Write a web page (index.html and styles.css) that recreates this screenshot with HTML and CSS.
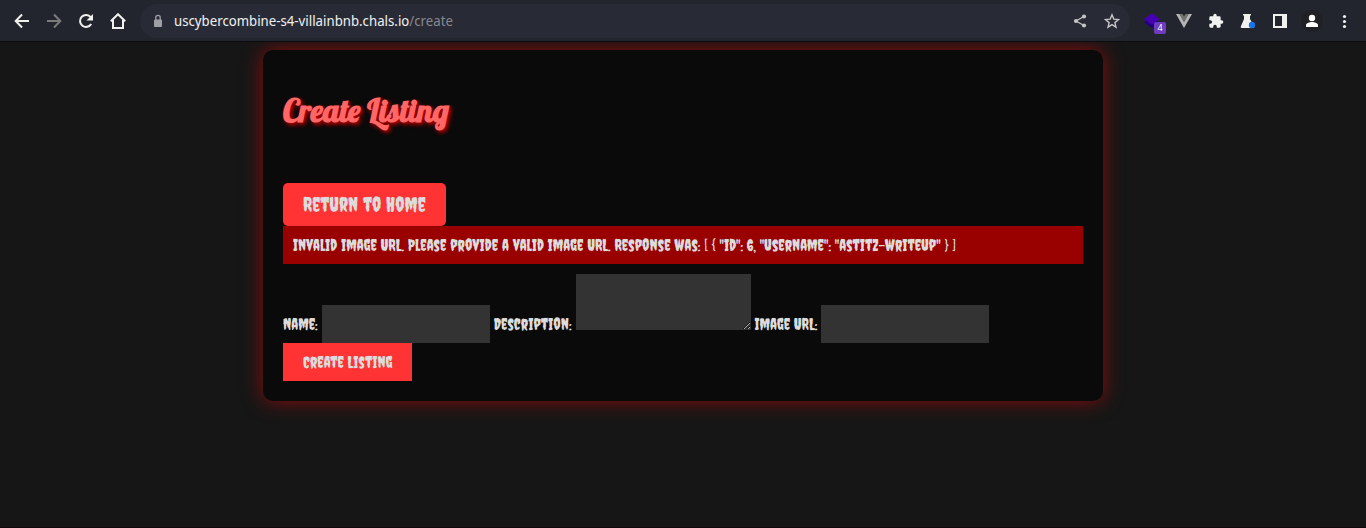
FILE: index.html
```html
<!DOCTYPE html>
<html lang="en">
<head>
<meta charset="utf-8">
<meta name="viewport" content="width=device-width, initial-scale=1">
<title>Create Listing</title>
<link rel="stylesheet" href="styles.css">
</head>
<body>
<header class="toolbar">
  <nav class="nav">
    <button class="icon-btn" type="button" aria-label="Back"><svg viewBox="0 0 16 16"><path d="M8 1.500 1.700 8 8 14.500M2 8h13" fill="none" stroke="#f1f1ee" stroke-width="2"/></svg></button>
    <button class="icon-btn" type="button" aria-label="Forward"><svg viewBox="0 0 16 16"><path d="M8 1.500 14.300 8 8 14.500M14 8H1" fill="none" stroke="#7b7b7d" stroke-width="2"/></svg></button>
    <button class="icon-btn" type="button" aria-label="Reload"><svg viewBox="0 0 16 16"><path d="M13.200 11A6 6 0 1 1 12.700 4.200" fill="none" stroke="#f1f1ee" stroke-width="2"/><path d="M15 1v6.500H8.500z" fill="#f1f1ee"/></svg></button>
    <button class="icon-btn" type="button" aria-label="Home"><svg viewBox="0 0 16 16"><path d="M.8 8.300 8 1.200l7.200 7.100M3 7v8h10V7" fill="none" stroke="#f1f1ee" stroke-width="2"/></svg></button>
  </nav>
  <div class="address">
    <svg class="lock" viewBox="0 0 10 14"><path d="M1 5.500h6a1 1 0 0 1 1 1V12a1 1 0 0 1-1 1H1a1 1 0 0 1-1-1V6.500a1 1 0 0 1 1-1z" fill="#9fa0a6"/><path d="M1.800 6V3.500a2.200 2.200 0 0 1 4.400 0V6" fill="none" stroke="#9fa0a6" stroke-width="1.300"/></svg>
    <span class="url">uscybercombine-s4-villainbnb.chals.io<span class="path">/create</span></span>
    <button class="icon-btn" type="button" aria-label="Share"><svg viewBox="0 0 16 16"><path d="M12 3.500 4 8l8 4.500" fill="none" stroke="#c4c4c4" stroke-width="1.300"/><g fill="#c4c4c4"><circle cx="12" cy="3.500" r="2.100"/><circle cx="4" cy="8" r="2.100"/><circle cx="12" cy="12.500" r="2.100"/></g></svg></button>
    <button class="icon-btn" type="button" aria-label="Bookmark"><svg viewBox="0 0 16 16"><path d="m8 1.800 1.800 4.300 4.700.4-3.600 3.100 1.100 4.600L8 11.700l-4 2.500 1.100-4.600-3.600-3.100 4.700-.4z" fill="none" stroke="#c4c4c4" stroke-width="1.400"/></svg></button>
  </div>
  <div class="extensions">
    <button class="icon-btn" type="button" aria-label="Layers extension, 4"><svg viewBox="0 0 16 16"><path d="M0 9.500 8 5l8 4.500L8 15z" fill="#1f0080"/><path d="M0 6 8 .3 16 6l-8 5.700z" fill="#4400b0"/></svg><span class="badge">4</span></button>
    <button class="icon-btn" type="button" aria-label="Vue"><svg viewBox="0 0 16 16"><path d="M0 1h3.500L8 9l4.500-8H16L8 15z" fill="#b5b5b5"/><path d="M3.500 1H6.500L8 3.500 9.500 1h3L8 9z" fill="#747474"/></svg></button>
    <button class="icon-btn" type="button" aria-label="Extensions"><svg viewBox="1 0 22 24"><path d="M20.500 11H19V7a2 2 0 0 0-2-2h-4V3.500a2.500 2.500 0 0 0-5 0V5H4a2 2 0 0 0-2 2v3.800h1.500a2.700 2.700 0 0 1 0 5.400H2V20a2 2 0 0 0 2 2h3.800v-1.500a2.700 2.700 0 0 1 5.400 0V22H17a2 2 0 0 0 2-2v-4h1.500a2.500 2.500 0 0 0 0-5z" fill="#f1f1ee"/></svg></button>
    <button class="icon-btn" type="button" aria-label="Labs"><svg viewBox="0 0 16 16"><path d="M3 1h8v1.500h-1V6l4 7.500q.3 1.500-1.500 1.500H2Q.2 15 .8 13.500L4 6V2.500H3z" fill="#f1f1ee"/><circle cx="12" cy="12" r="3.200" fill="#1a73e8"/></svg></button>
    <button class="icon-btn" type="button" aria-label="Side panel"><svg viewBox="0 0 16 16"><path fill-rule="evenodd" d="M1 1h14v14H1zm2 2v10h7V3z" fill="#f1f1ee"/></svg></button>
    <button class="icon-btn profile" type="button" aria-label="Profile"><svg viewBox="0 0 16 16"><circle cx="8" cy="5" r="3.200" fill="#fff"/><path d="M2 14v-2c0-2 4-3 6-3s6 1 6 3v2z" fill="#fff"/></svg></button>
    <button class="icon-btn" type="button" aria-label="Menu"><svg viewBox="0 0 16 16"><g fill="#f1f1ee"><circle cx="8.500" cy="3.500" r="1.600"/><circle cx="8.500" cy="8.500" r="1.600"/><circle cx="8.500" cy="13.500" r="1.600"/></g></svg></button>
  </div>
</header>
<main class="container">
  <h1 class="title">Create Listing</h1>
  <a class="home-link" href="#">Return to Home</a>
  <p class="error">Invalid image URL. Please provide a valid image URL. Response was: [ { "id": 6, "username": "astitz-writeup" } ]</p>
  <form class="form">
    <div class="fields">
      <label class="label" for="name">Name:</label>
      <input class="input" id="name" type="text">
      <label class="label" for="description">Description:</label>
      <textarea class="input textarea" id="description"></textarea>
      <label class="label" for="image">Image URL:</label>
      <input class="input" id="image" type="text">
    </div>
    <button class="submit" type="submit">Create Listing</button>
  </form>
</main>
</body>
</html>
```
FILE: styles.css
```css
* {
  box-sizing: border-box;
}

body {
  min-height: 100vh;
  margin: 0;
  border-bottom: 1px solid #10090e;
  background: #161616;
  color: #dcdcdc;
  font-family: Creepster, "Liberation Sans Narrow", "Liberation Sans", sans-serif;
  font-size: 16px;
}

button,
input,
textarea {
  margin: 0;
  border: 0;
  font: inherit;
  color: inherit;
}

.toolbar {
  display: flex;
  align-items: center;
  height: 42px;
  padding: 0 14px;
  background: #22252e;
  border-bottom: 1px solid #0b0c0f;
  position: relative;
  z-index: 1;
}

.nav,
.extensions {
  display: flex;
  align-items: center;
  gap: 16px;
}

.icon-btn {
  position: relative;
  flex: none;
  width: 16px;
  height: 16px;
  padding: 0;
  background: none;
}

.icon-btn svg {
  display: block;
  width: 16px;
  height: 16px;
}

.address {
  flex: 1;
  display: flex;
  align-items: center;
  gap: 16px;
  height: 34px;
  margin: 0 14px;
  padding: 0 10px 0 14px;
  border-radius: 17px;
  background: #282a35;
}

.lock {
  width: 10px;
  height: 14px;
}

.url {
  flex: 1;
  margin-left: -6px;
  color: #ededed;
  font: 14px/20px "Noto Sans Display", "Noto Sans", sans-serif;
  white-space: nowrap;
}

.path {
  color: #86878d;
}

.badge {
  position: absolute;
  top: 9px;
  left: 10px;
  width: 12px;
  height: 12px;
  border-radius: 2px;
  background: #6f3cc0;
  color: #fff;
  font: 9px/12px "Noto Sans", sans-serif;
  text-align: center;
}

.profile {
  border-radius: 50%;
  box-shadow: 0 0 0 3px #202124;
  background: #202124;
}

.container {
  max-width: 840px;
  margin: 8px auto;
  padding: 20px;
  border-radius: 10px;
  background: #0a0a0a;
  box-shadow: 0 0 20px rgba(255, 0, 0, 0.5);
}

.title {
  margin: 20px 0 52px;
  color: #ff6666;
  font: bold 32px/41px Lobster, "Liberation Serif", serif;
  text-shadow: 2px 2px 4px #cc0000;
}

.home-link {
  display: block;
  width: fit-content;
  padding: 10px 20px;
  border-radius: 5px;
  background: #ff3333;
  color: #dcdcdc;
  font-size: 20px;
  line-height: 23px;
  text-decoration: none;
  white-space: nowrap;
}

.error {
  margin: 0 0 10px;
  padding: 10px;
  background: #990000;
  line-height: 18px;
}

.fields {
  display: flex;
  flex-wrap: wrap;
  align-items: flex-end;
  column-gap: 4px;
}

.label {
  line-height: 38px;
  white-space: nowrap;
}

.input {
  width: 168px;
  height: 38px;
  padding: 10px;
  background: #333333;
}

.textarea {
  width: 175px;
  height: 56px;
  margin-bottom: 13px;
}

.submit {
  padding: 10px 20px;
  background: #ff3333;
  line-height: 18px;
  white-space: nowrap;
}
```
